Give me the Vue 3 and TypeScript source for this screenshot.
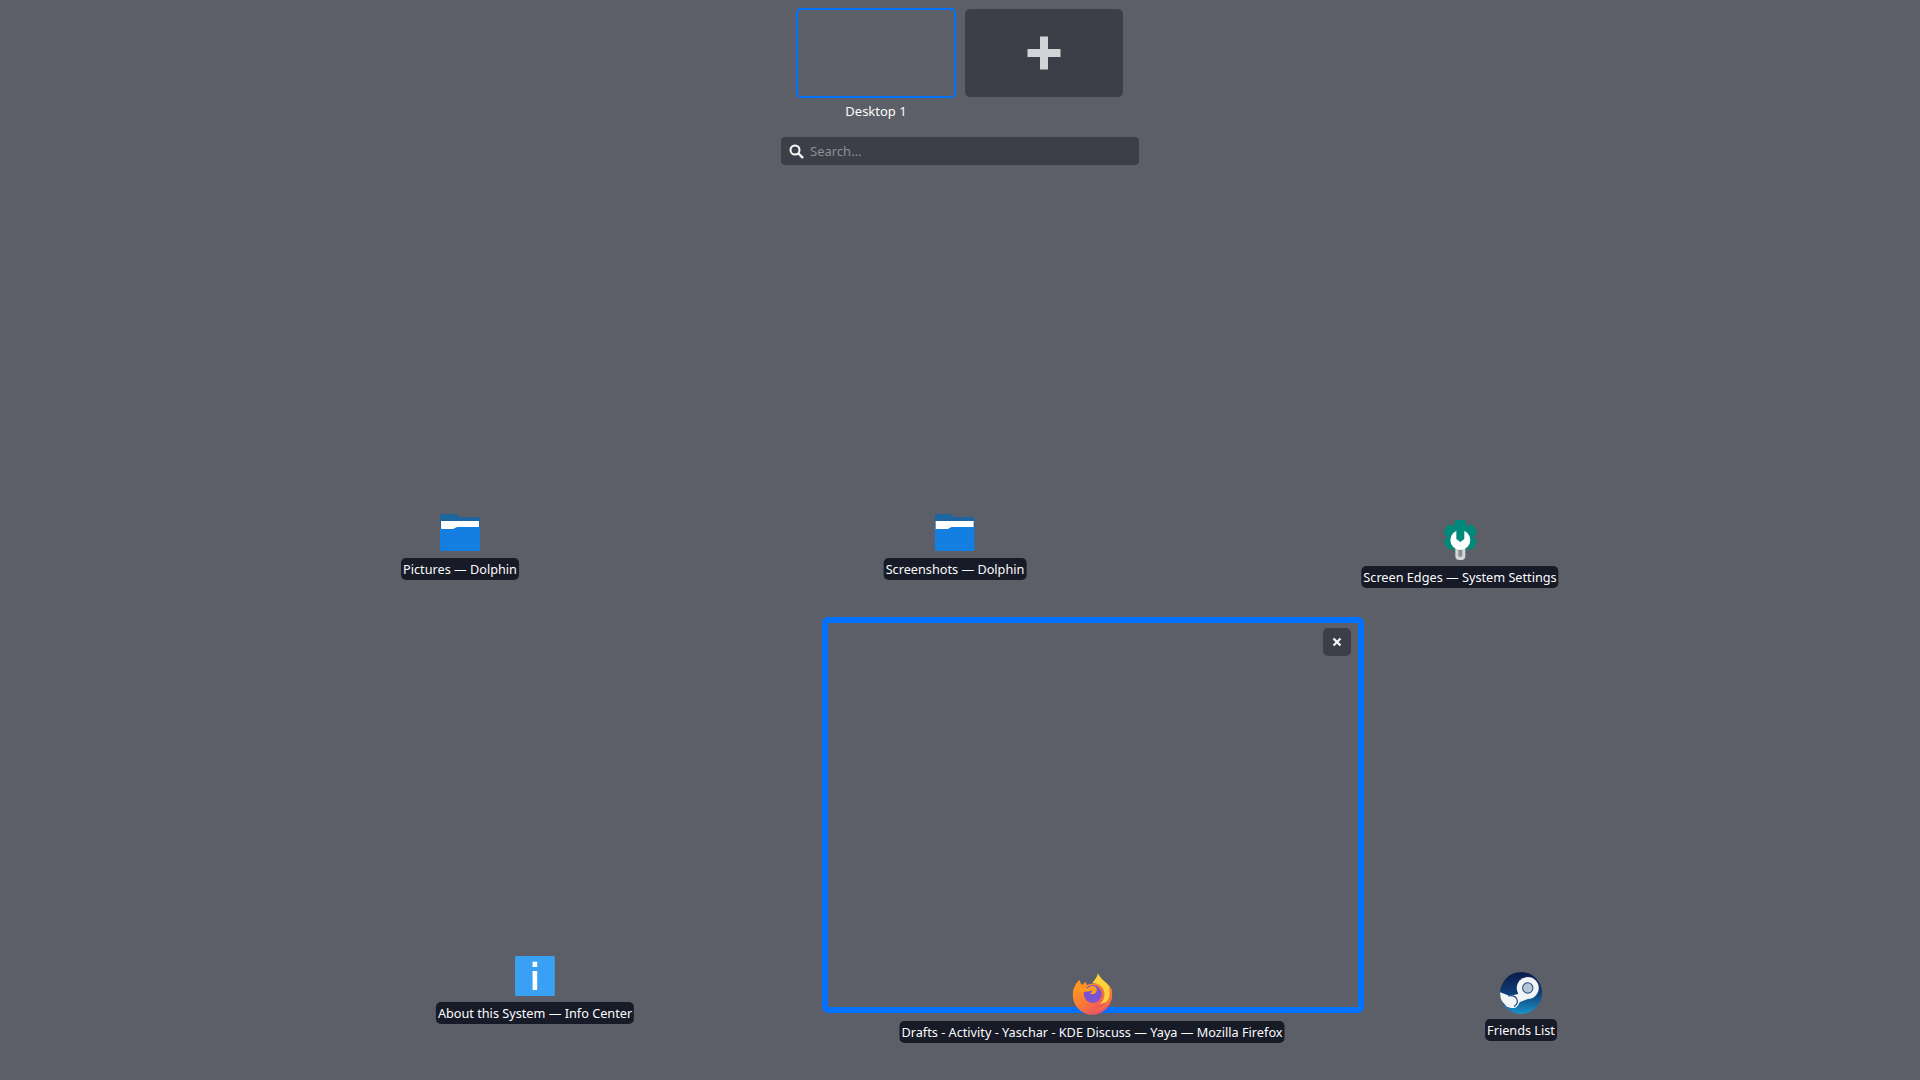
<script setup lang="ts">
type IconKind = 'folder' | 'gear' | 'info' | 'firefox' | 'steam';

interface WindowItem {
  title: string;
  icon: IconKind;
  centerX: number;
  top: number;
}

// places of the window captions on the overview canvas
const windows: WindowItem[] = [
  { title: 'Pictures — Dolphin', icon: 'folder', centerX: 460, top: 514 },
  { title: 'Screenshots — Dolphin', icon: 'folder', centerX: 955, top: 514 },
  { title: 'Screen Edges — System Settings', icon: 'gear', centerX: 1460, top: 520 },
  { title: 'About this System — Info Center', icon: 'info', centerX: 535, top: 956 },
  { title: 'Drafts - Activity - Yaschar - KDE Discuss — Yaya — Mozilla Firefox', icon: 'firefox', centerX: 1092, top: 973 },
  { title: 'Friends List', icon: 'steam', centerX: 1521, top: 972 },
];
</script>

<template>
  <div class="overview">
    <header class="top">
      <div class="desktops">
        <div class="desktop">
          <div class="thumb"></div>
          <div class="desktop-name">Desktop 1</div>
        </div>
        <button class="add-desktop" type="button" aria-label="Add desktop">
          <svg width="34" height="34" viewBox="0 0 34 34">
            <path d="M13 0.500h8v12.500h12.500v8H21v12.500h-8V21H0.500v-8H13z" fill="#d2d3d6" />
          </svg>
        </button>
      </div>
      <div class="search">
        <svg class="search-icon" width="15" height="15" viewBox="0 0 15 15">
          <circle cx="6" cy="6" r="4.500" fill="none" stroke="#fcfcfc" stroke-width="2" />
          <path d="M9.500 9.500L14 14" stroke="#fcfcfc" stroke-width="2.400" />
        </svg>
        <span class="placeholder">Search...</span>
      </div>
    </header>

    <div class="frame">
      <button class="close" type="button" aria-label="Close">
        <svg width="10" height="10" viewBox="0 0 10 10">
          <path d="M1.500 1.500l7 7M8.500 1.500l-7 7" stroke="#fcfcfc" stroke-width="2.200" />
        </svg>
      </button>
    </div>

    <div
      v-for="win in windows"
      :key="win.title"
      class="window"
      :style="{ left: win.centerX + 'px', top: win.top + 'px' }"
    >
      <svg v-if="win.icon === 'folder'" class="icon icon-folder" width="40" height="37" viewBox="0 0 40 37">
        <path d="M2 0h14l3 3h19a2 2 0 0 1 2 2v10H0V2a2 2 0 0 1 2-2z" fill="#1d659f" />
        <rect x="1" y="7" width="38" height="8" fill="#fff" />
        <path d="M0 15h13l4-2h23v22a2 2 0 0 1-2 2H2a2 2 0 0 1-2-2z" fill="#147fe0" />
      </svg>

      <svg v-else-if="win.icon === 'gear'" class="icon" width="38" height="40" viewBox="0 0 38 40">
        <g fill="#00897b">
          <circle cx="19" cy="17" r="12.500" />
          <rect x="13" y="0" width="12" height="34" rx="3.500" />
          <rect x="13" y="0" width="12" height="34" rx="3.500" transform="rotate(60 19 17)" />
          <rect x="13" y="0" width="12" height="34" rx="3.500" transform="rotate(120 19 17)" />
        </g>
        <rect x="14" y="24" width="10" height="16" rx="4" fill="#d6d6d6" />
        <rect x="17" y="28" width="4" height="9" rx="2" fill="#8b8d92" />
        <circle cx="19" cy="20" r="10" fill="#fff" />
        <path d="M15 8h8v11l-4 3-4-3z" fill="#00897b" />
      </svg>

      <svg v-else-if="win.icon === 'info'" class="icon" width="40" height="40" viewBox="0 0 40 40">
        <rect width="40" height="40" rx="1.500" fill="#3aa0f4" />
        <rect x="17.700" y="5.700" width="4.600" height="5.300" fill="#fff" />
        <rect x="17.700" y="15" width="4.600" height="19" fill="#fff" />
      </svg>

      <svg v-else-if="win.icon === 'firefox'" class="icon" width="40" height="42" viewBox="0 0 40 42">
        <defs>
          <linearGradient id="fx-body" x1="0" y1="0.200" x2="0.700" y2="1">
            <stop offset="0" stop-color="#ff9a1f" />
            <stop offset="0.550" stop-color="#f9743a" />
            <stop offset="1" stop-color="#ea4d72" />
          </linearGradient>
        </defs>
        <path d="M0.300 22C0.300 16 3 10 7.300 7C7.500 9 8.500 11 9.700 12L13 8.700L14.500 12C17 10.500 27 10 30 12L39.700 22A19.700 19.700 0 0 1 0.300 22Z" fill="url(#fx-body)" />
        <path d="M25.300 0.300C25 4 22 7 19.700 10.300C27 10 32 15 32 21C32 26 30 29 27 31C34 30 40 26 39.700 20C39.500 12 30 9 25.300 0.300Z" fill="#ffd13d" />
        <path d="M36 11.500C38.500 14 40 18 39.700 22C39.500 30 31 38 21 38C29 36 36 30 37 22C37.500 18 37 14 36 11.500Z" fill="#f9743a" />
        <circle cx="20.300" cy="21" r="9" fill="#7b52d0" />
        <path d="M5.300 17.700C8 15.500 12 14.500 15 15.500C16.500 14 18 13.200 20 13C24 13.500 25 16 24 18.500C23 21 19.500 22 17.500 20.500C18.500 20 19.500 19 19.700 17.500C15 19 10 19.500 5.300 17.700Z" fill="#ff9a1f" />
      </svg>

      <svg v-else class="icon icon-steam" width="42" height="42" viewBox="0 0 42 42">
        <defs>
          <linearGradient id="steam-bg" x1="0.500" y1="0" x2="0.500" y2="1">
            <stop offset="0" stop-color="#0c1a49" />
            <stop offset="0.500" stop-color="#0e3d77" />
            <stop offset="1" stop-color="#1a93c9" />
          </linearGradient>
          <clipPath id="steam-clip">
            <circle cx="21" cy="21" r="21" />
          </clipPath>
        </defs>
        <circle cx="21" cy="21" r="21" fill="url(#steam-bg)" />
        <g clip-path="url(#steam-clip)">
          <path d="M-1 20L10 24L18 22L20 10L33 25L20 30L14 36L7 35L0 27Z" fill="#f2f4f6" />
          <circle cx="27.700" cy="16" r="11" fill="#f2f4f6" />
          <circle cx="27.700" cy="16" r="5.700" fill="#1f4a7e" />
          <circle cx="27.700" cy="16" r="4.700" fill="#b4c5d6" />
          <circle cx="12.700" cy="29.600" r="6.500" fill="#f2f4f6" />
          <path d="M8 24c3-1 7 0 8.500 2.500 1.500 3 .5 6-2.500 8" fill="none" stroke="#1f4a7e" stroke-width="1.200" />
        </g>
      </svg>
      <span class="caption">{{ win.title }}</span>
    </div>
  </div>
</template>

<style scoped>
.overview {
  position: relative;
  width: 1920px;
  height: 1080px;
  overflow: hidden;
  background-color: #5c5f68;
  font-family: "Noto Sans", "Liberation Sans", sans-serif;
  font-size: 12.7px;
  color: #fcfcfc;
}

.top {
  display: flex;
  flex-direction: column;
  align-items: center;
  padding-top: 8px;
}

.desktops {
  display: flex;
  align-items: flex-start;
  gap: 9px;
  margin-left: -1px;
}

.desktop {
  display: flex;
  flex-direction: column;
  align-items: center;
}

.thumb {
  box-sizing: border-box;
  width: 160px;
  height: 90px;
  border: 2px solid #0070ff;
  border-radius: 5px;
}

.desktop-name {
  margin-top: 2px;
  line-height: 22px;
  height: 22px;
  font-size: 13px;
}

.add-desktop {
  display: flex;
  align-items: center;
  justify-content: center;
  width: 158px;
  height: 88px;
  margin-top: 1px;
  padding: 0;
  border: none;
  border-radius: 5px;
  background-color: #3c3f48;
}

.search {
  box-sizing: border-box;
  display: flex;
  align-items: center;
  gap: 6px;
  width: 358px;
  height: 28px;
  margin-top: 15px;
  padding-left: 8px;
  border-radius: 4px;
  background-color: #3c3f48;
}

.placeholder {
  color: #8d8f95;
  font-size: 13px;
}

.frame {
  position: absolute;
  left: 822px;
  top: 617px;
  box-sizing: border-box;
  width: 542px;
  height: 396px;
  border: 6px solid #0070ff;
  border-radius: 6px;
}

.close {
  position: absolute;
  top: 5px;
  right: 7px;
  display: flex;
  align-items: center;
  justify-content: center;
  width: 28px;
  height: 28px;
  padding: 0;
  border: none;
  border-radius: 5px;
  background-color: #3c3f48;
}

.window {
  position: absolute;
  display: flex;
  flex-direction: column;
  align-items: center;
  transform: translateX(-50%);
  white-space: nowrap;
}

.icon {
  display: block;
}

.icon-folder {
  margin-bottom: 1px;
}

.icon-steam {
  margin-bottom: -1px;
}

.caption {
  margin-top: 6px;
  padding: 0 2px;
  line-height: 22px;
  border-radius: 5px;
  background-color: #171a27;
}
</style>
